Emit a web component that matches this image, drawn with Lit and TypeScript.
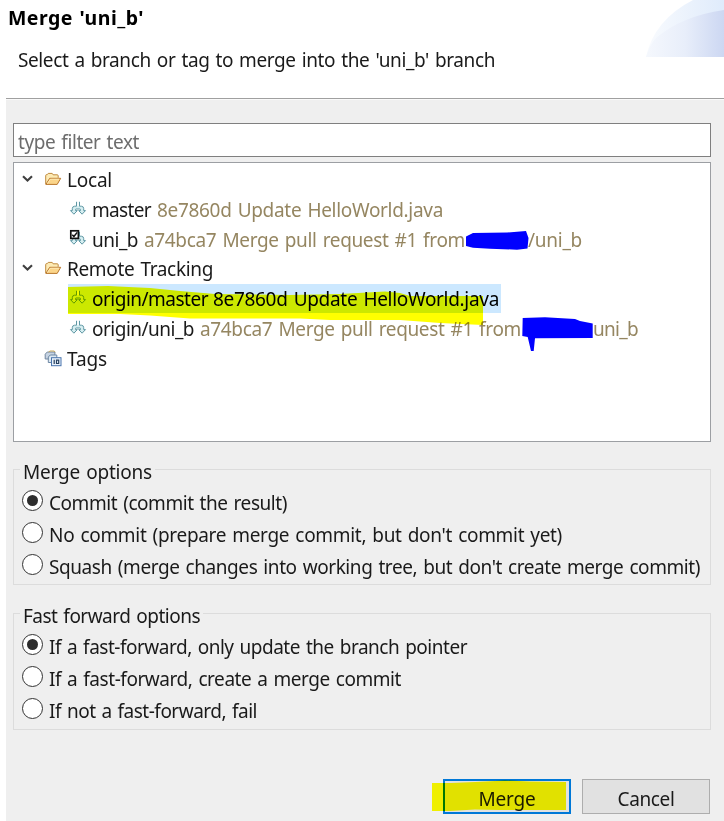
import { LitElement, html, svg, css, nothing } from "lit";
import { customElement, property } from "lit/decorators.js";

/** One line of text whose tracking is computed so that it spans `width` pixels. */
@customElement("fit-text")
class FitText extends LitElement {
  @property() text = "";
  @property({ type: Number }) width = 0;

  static styles = css`
    :host { display: block; white-space: pre; flex: none; }
    .run { display: inline-block; }
  `;

  firstUpdated() {
    const run = this.renderRoot.querySelector(".run") as HTMLElement;
    const natural = run.getBoundingClientRect().width;
    const spacing = (this.width - natural) / this.text.length;
    run.style.letterSpacing = `${spacing.toFixed(3)}px`;
    this.style.width = `${this.width}px`;
  }

  render() {
    return html`<span class="run">${this.text}</span>`;
  }
}

const folderIcon = svg`
  <path d="M.7 12.200V3.600Q.7 2.600 1.700 2.600h.6L3.200 1.400h4l.9 1.400h4.200q.9 0 .9 1v2" fill="#fdebb5" stroke="#c08a3e"/>
  <path d="M.9 12.400L4.700 6.300h11L12.200 12.400z" fill="#fbd58a" stroke="#b9772c" stroke-linejoin="round"/>
  <path d="M2.400 11.600L5.400 7.200h8.800" fill="none" stroke="#fff0c4" stroke-width=".8"/>`;

const branchIcon = svg`
  <path d="M6.500.8v4.400H4.600Q2.300 5.400 2.300 7.600v2H.5L3.900 13.200L7.300 9.600H5.500V8.600Q5.500 8 6.200 8h3.600q.7 0 .7.600v1H8.700l3.400 3.600L15.500 9.600h-1.800v-2q0-2.200-2.300-2.400H9.500V.8" fill="#d6eef1" stroke="#5f98a4" stroke-linejoin="round"/>
  <path d="M8 .5v4.500" fill="none" stroke="#fff" stroke-width="1.500"/>`;

const currentMark = svg`
  <rect x=".8" y="-.2" width="7.600" height="7.600" fill="#fff" stroke="#111" stroke-width="1.700"/>
  <path d="M2.300 3.700l1.600 1.800L7.200 1.400" fill="none" stroke="#111" stroke-width="1.500"/>`;

const tagsIcon = svg`
  <path d="M.2 6V3.200L2.300 1h7.600v4H4.600v3H.2z" fill="#c6d3e2" stroke="#71869f"/>
  <path d="M3.500 1.200L5 0h4.200l1 1.200" fill="none" stroke="#c9a95c"/>
  <path d="M3.300 11.500V6l2-2h6.500v7.500z" fill="#dce8f2" stroke="#6d87a3"/>
  <rect x="6.500" y="6.700" width="9.500" height="8" fill="#e9f2fc" stroke="#4a75ad"/>
  <path d="M9.200 8.700v4.300M11.500 9.200h2.200v3.300h-2.200z" fill="none" stroke="#27405f" stroke-width="1.200"/>`;

type Part = { t: string; w: number; gap?: number; dim?: boolean };
type Row = { icon: "folder" | "branch" | "current" | "tags"; parts: Part[]; open?: boolean; child?: boolean; selected?: boolean };

const rows: Row[] = [
  { icon: "folder", open: true, parts: [{ t: "Local", w: 45 }] },
  { icon: "branch", child: true, parts: [{ t: "master", w: 59 }, { t: "8e7860d Update HelloWorld.java", w: 286, gap: 6, dim: true }] },
  { icon: "current", child: true, parts: [{ t: "uni_b", w: 46 }, { t: "a74bca7 Merge pull request #1 from", w: 321, gap: 6, dim: true }, { t: "/uni_b", w: 54, gap: 63, dim: true }] },
  { icon: "folder", open: true, parts: [{ t: "Remote Tracking", w: 146 }] },
  { icon: "branch", child: true, selected: true, parts: [{ t: "origin/master", w: 116 }, { t: "8e7860d Update HelloWorld.java", w: 286, gap: 5 }] },
  { icon: "branch", child: true, parts: [{ t: "origin/uni_b", w: 102 }, { t: "a74bca7 Merge pull request #1 from", w: 321, gap: 6, dim: true }, { t: "uni_b", w: 45, gap: 72, dim: true }] },
  { icon: "tags", parts: [{ t: "Tags", w: 40 }] },
];

const groups = [
  {
    title: "Merge options", w: 129,
    options: [
      { t: "Commit (commit the result)", w: 238, on: true },
      { t: "No commit (prepare merge commit, but don't commit yet)", w: 513 },
      { t: "Squash (merge changes into working tree, but don't create merge commit)", w: 651 },
    ],
  },
  {
    title: "Fast forward options", w: 177,
    options: [
      { t: "If a fast-forward, only update the branch pointer", w: 418, on: true },
      { t: "If a fast-forward, create a merge commit", w: 352 },
      { t: "If not a fast-forward, fail", w: 208 },
    ],
  },
];

@customElement("app-root")
class AppRoot extends LitElement {
  static styles = css`
    :host {
      display: block; position: relative; width: 724px; height: 821px; overflow: hidden;
      background: #fff; color: #1a1a1a;
      font: 19px/30px "Noto Sans", "Open Sans", sans-serif; word-spacing: 1.5px;
    }
    * { box-sizing: border-box; }
    .header { height: 98px; padding: 3px 0 0 8px; }
    .title { font-weight: 700; font-size: 19.5px; color: #000; word-spacing: 1px; }
    .subtitle { padding: 12px 0 0 10px; }
    .swoosh { position: absolute; right: 0; top: 0; }
    .body {
      height: 723px; margin-left: 6px; padding: 24px 13px 0 7px;
      background: #efefef; border-top: 1px solid #a0a0a0; box-shadow: inset 0 1px #fafafa;
    }
    .filter { height: 34px; border: 1px solid #7f7f7f; background: #fff; color: #6d6d6d; padding: 3px 0 0 4px; }
    .tree { height: 280px; margin-top: 5px; border: 1px solid #9c9fa3; background: #fff; padding-top: 2px; }
    .row { display: flex; height: 29.75px; line-height: 31.75px; }
    .twist { width: 31px; padding-left: 8px; flex: none; }
    .icon { display: block; flex: none; overflow: visible; margin-top: 7px; }
    .twist .icon { margin-top: 8px; }
    .label { display: flex; height: 29px; padding-left: 5px; }
    .child .twist { width: 54px; }
    .selected .label, .selected .lead { background: #cce8ff; }
    .lead { display: flex; height: 29px; padding-left: 2px; }
    .child .lead .icon { margin-top: 6px; }
    .dim { color: #958661; }
    .selected .label { padding-right: 2px; color: #000; }
    .gap { flex: none; }
    .group { height: 116px; margin-top: 27px; border: 1px solid #dcdcdc; padding-left: 8px; }
    .group + .group { height: 117px; margin-top: 28px; }
    .legend { width: fit-content; height: 19px; margin: -13px 0 0 -2px; padding: 0 3px; background: #efefef; line-height: 30px; }
    .option { display: flex; align-items: center; height: 32px; gap: 6px; }
    .options { padding-top: 9px; }
    .radio { width: 21px; height: 21px; border: 1.5px solid #333; border-radius: 50%; background: #fff; display: grid; place-items: center; margin-top: -1px; }
    .dot { width: 11px; height: 11px; border-radius: 50%; background: #2d2d2d; }
    .option fit-text { margin-top: 3px; }
    .actions { display: flex; justify-content: flex-end; gap: 11px; margin: 49px 1px 0 0; }
    .button {
      display: flex; justify-content: center; width: 128px; height: 35px; padding: 4px 0 0;
      border: 1px solid #adadad; background: #e1e1e1; color: inherit; font: inherit; line-height: 30px;
    }
    .button.primary { border: 2px solid #0078d7; padding-top: 3px; }
    .marker, .redact { position: absolute; left: 0; top: 0; pointer-events: none; }
    .marker { mix-blend-mode: multiply; }
  `;

  private icon(kind: Row["icon"]) {
    const art = kind === "folder" ? folderIcon : kind === "tags" ? tagsIcon : branchIcon;
    return html`<svg class="icon" width="17" height="16" viewBox="0 0 17 16" fill="none">
      ${art}${kind === "current" ? currentMark : nothing}
    </svg>`;
  }

  private row(r: Row) {
    return html`<div class="row ${r.child ? "child" : ""} ${r.selected ? "selected" : ""}">
      <div class="twist">${r.open
        ? html`<svg class="icon" width="11" height="12" viewBox="0 0 11 12"><path d="M1 3.200l4.500 4.300L10 3.200" fill="none" stroke="#404040" stroke-width="2.100"/></svg>`
        : nothing}</div>
      ${r.child ? html`<div class="lead">${this.icon(r.icon)}</div>` : this.icon(r.icon)}
      <div class="label">${r.parts.map((p) => html`
        <span class="gap" style="width:${p.gap ?? 0}px"></span>
        <fit-text class=${p.dim ? "dim" : ""} .text=${p.t} .width=${p.w}></fit-text>`)}
      </div>
    </div>`;
  }

  render() {
    return html`
      <div class="header">
        <fit-text class="title" .text=${"Merge 'uni_b'"} .width=${136}></fit-text>
        <fit-text class="subtitle" .text=${"Select a branch or tag to merge into the 'uni_b' branch"} .width=${477}></fit-text>
        <svg class="swoosh" width="78" height="57" viewBox="0 0 78 57">
          <defs>
            <linearGradient id="a"><stop offset="0" stop-color="#f9fbfe"/><stop offset="1" stop-color="#dfebfb"/></linearGradient>
            <linearGradient id="b"><stop offset="0" stop-color="#f5f8fd"/><stop offset=".5" stop-color="#e8eefa"/><stop offset="1" stop-color="#ccd7f2"/></linearGradient>
          </defs>
          <path d="M0 57Q8 20 47 0H78V57z" fill="url(#a)"/>
          <path d="M0 57Q3 46 10 38Q36 16 78 10V57z" fill="url(#b)"/>
        </svg>
      </div>
      <div class="body">
        <div class="filter"><fit-text .text=${"type filter text"} .width=${121}></fit-text></div>
        <div class="tree">${rows.map((r) => this.row(r))}</div>
        ${groups.map((g) => html`<div class="group">
          <div class="legend"><fit-text .text=${g.title} .width=${g.w}></fit-text></div>
          <div class="options">${g.options.map((o) => html`<div class="option">
            <span class="radio">${o.on ? html`<span class="dot"></span>` : nothing}</span>
            <fit-text .text=${o.t} .width=${o.w}></fit-text>
          </div>`)}</div>
        </div>`)}
        <div class="actions">
          <button class="button primary"><fit-text .text=${"Merge"} .width=${57}></fit-text></button>
          <button class="button"><fit-text .text=${"Cancel"} .width=${57}></fit-text></button>
        </div>
      </div>
      <svg class="marker" width="724" height="821" fill="#ffff00">
        <path d="M68 287L108 286L118 286.500L150 288L180 291L215 294L290 295L340 294L385 291.500L400 293L410 296L483 296V325L440 323L400 320L330 320L300 318.500H190L150 315.500L120 314H68z"/>
        <path d="M432 783H451L475 782L505 780.500L530 781.500L566 782V810H500L475 809.500L450 811H432z"/>
      </svg>
      <svg class="redact" width="724" height="821" fill="#0000ff">
        <path d="M466 236.500L473 233L507 232.500L526 231L528.500 238L527.500 248.500L517 249.700L490 248.700L473 247.700L466 246z"/>
        <path d="M522.700 318L545 317.300L575 319L580 321L592.700 323.500V338L535 338.300L533.700 351H531L527.700 337L522.300 336z"/>
      </svg>`;
  }
}
